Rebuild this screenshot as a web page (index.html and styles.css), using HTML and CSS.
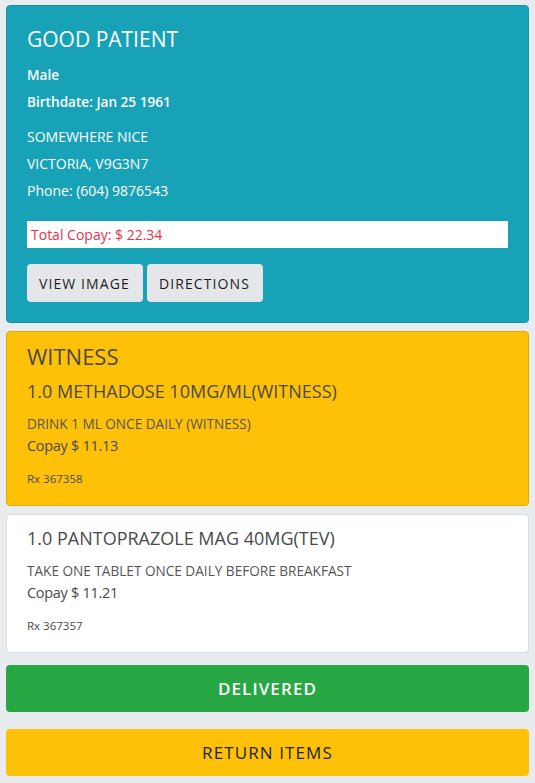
FILE: index.html
```html
<!DOCTYPE html>
<html>
<head>
<meta charset="utf-8">
<link rel="stylesheet" href="styles.css">
</head>
<body>
<div class="page">
  <section class="card card-info">
    <h1 class="patient-name">GOOD PATIENT</h1>
    <div class="bold-line">Male</div>
    <div class="bold-line">Birthdate: Jan 25 1961</div>
    <div class="address">
      <div class="line">SOMEWHERE NICE</div>
      <div class="line">VICTORIA, V9G3N7</div>
      <div class="line">Phone: (604) 9876543</div>
    </div>
    <div class="total">Total Copay: $ 22.34</div>
    <div class="btn-row">
      <button class="btn btn-gray">VIEW IMAGE</button>
      <button class="btn btn-gray">DIRECTIONS</button>
    </div>
  </section>

  <section class="card card-warning">
    <h2 class="witness">WITNESS</h2>
    <h3 class="drug">1.0 METHADOSE 10MG/ML(WITNESS)</h3>
    <div class="sig">DRINK 1 ML ONCE DAILY (WITNESS)</div>
    <div class="copay">Copay $ 11.13</div>
    <div class="rx">Rx 367358</div>
  </section>

  <section class="card card-white">
    <h3 class="drug">1.0 PANTOPRAZOLE MAG 40MG(TEV)</h3>
    <div class="sig">TAKE ONE TABLET ONCE DAILY BEFORE BREAKFAST</div>
    <div class="copay">Copay $ 11.21</div>
    <div class="rx">Rx 367357</div>
  </section>

  <button class="big-btn big-green">DELIVERED</button>
  <button class="big-btn big-yellow">RETURN ITEMS</button>
</div>
</body>
</html>
```

FILE: styles.css
```css
html, body {
  margin: 0;
  padding: 0;
  background: #e9ecef;
}
body {
  font-family: "Open Sans", "Noto Sans", sans-serif;
  color: #212529;
}
.page {
  padding: 5px 6px 0 6px;
  display: flex;
  flex-direction: column;
}
.card {
  border-radius: 4px;
  border: 1px solid transparent;
  padding: 20px;
}
.card-info {
  background: #17a2b8;
  border-color: #1592a6;
  color: #fff;
}
.patient-name {
  margin: 0 0 9px 0;
  font-size: 21px;
  font-weight: 400;
  line-height: 26px;
}
.bold-line {
  font-size: 13.6px;
  font-weight: 600;
  line-height: 27px;
}
.address {
  margin-top: 8px;
}
.address .line {
  font-size: 14px;
  line-height: 27px;
}
.total {
  margin-top: 17px;
  background: #fff;
  color: #e5334b;
  font-size: 14px;
  line-height: 27px;
  padding: 0 4px;
}
.btn-row {
  display: flex;
  gap: 4px;
  margin-top: 16px;
}
.btn {
  font-family: inherit;
  border: none;
  border-radius: 4px;
  font-size: 14px;
  letter-spacing: 1.1px;
  height: 38px;
  padding: 0 13px 0 12px;
  color: #1b1e21;
}
.btn-gray {
  background: #e4e6e9;
}
.card-warning {
  margin-top: 8px;
  background: #ffc107;
  border-color: #e0aa06;
  color: #4a4a4a;
  padding: 11px 20px 17px 20px;
}
.witness {
  margin: 0;
  font-size: 22px;
  font-weight: 400;
  line-height: 26px;
}
.drug {
  margin: 10px 0 0 0;
  font-size: 18px;
  font-weight: 400;
  line-height: 24px;
}
.sig {
  margin-top: 11px;
  font-size: 13.6px;
  line-height: 20px;
  font-weight: 400;
  color: #555;
}
.copay {
  font-size: 14.5px;
  letter-spacing: -0.3px;
  line-height: 24px;
}
.rx {
  margin-top: 12px;
  font-size: 11.5px;
  line-height: 18px;
}
.card-white {
  margin-top: 8px;
  background: #fff;
  border-color: #dcdfe2;
  color: #4a4a4a;
  padding: 11px 20px 17px 20px;
}
.card-white .drug {
  margin-top: 0;
}
.big-btn {
  font-family: inherit;
  border: none;
  border-radius: 4px;
  height: 47px;
  width: 100%;
  font-size: 17px;
  letter-spacing: 1.1px;
}
.big-green {
  margin-top: 12px;
  background: #28a745;
  color: #fff;
  font-weight: 600;
}
.big-yellow {
  margin-top: 17px;
  background: #ffc107;
  color: #212529;
}
```
